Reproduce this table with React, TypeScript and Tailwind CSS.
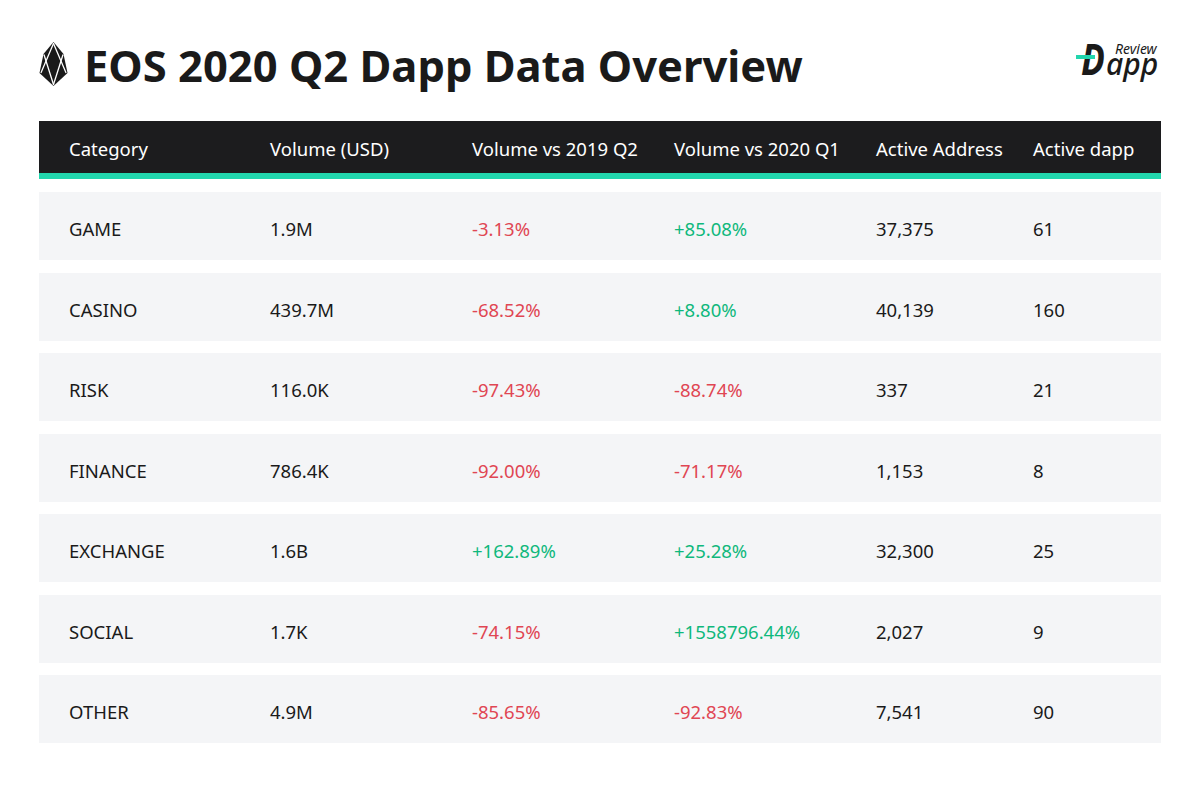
import React from "react";

type Row = {
  cat: string;
  vol: string;
  y19: string;
  q1: string;
  addr: string;
  dapp: string;
};

const rows: Row[] = [
  { cat: "GAME", vol: "1.9M", y19: "-3.13%", q1: "+85.08%", addr: "37,375", dapp: "61" },
  { cat: "CASINO", vol: "439.7M", y19: "-68.52%", q1: "+8.80%", addr: "40,139", dapp: "160" },
  { cat: "RISK", vol: "116.0K", y19: "-97.43%", q1: "-88.74%", addr: "337", dapp: "21" },
  { cat: "FINANCE", vol: "786.4K", y19: "-92.00%", q1: "-71.17%", addr: "1,153", dapp: "8" },
  { cat: "EXCHANGE", vol: "1.6B", y19: "+162.89%", q1: "+25.28%", addr: "32,300", dapp: "25" },
  { cat: "SOCIAL", vol: "1.7K", y19: "-74.15%", q1: "+1558796.44%", addr: "2,027", dapp: "9" },
  { cat: "OTHER", vol: "4.9M", y19: "-85.65%", q1: "-92.83%", addr: "7,541", dapp: "90" },
];

function Pct({ v }: { v: string }) {
  const pos = v.startsWith("+");
  return <span className={pos ? "text-[#0fb87c]" : "text-[#e04653]"}>{v}</span>;
}

function EosLogo() {
  return (
    <svg width="29" height="44" viewBox="0 0 28 44" className="shrink-0">
      <polygon points="14,0 24,12 28,31 14,44 0,31 4,12" fill="#1a1a1a" />
      <g stroke="#ffffff" strokeWidth="1.3" fill="none" strokeLinecap="round">
        <line x1="14" y1="1.5" x2="1.6" y2="30.5" />
        <line x1="14" y1="1.5" x2="26.4" y2="30.5" />
        <line x1="4.6" y1="13" x2="14" y2="42.5" />
        <line x1="23.4" y1="13" x2="14" y2="42.5" />
      </g>
    </svg>
  );
}

function DappLogo() {
  return (
    <div className="relative w-[87px] h-[36px] mt-[2px] mr-[-2px]">
      <span className="absolute left-[5px] top-[-7px] text-[43px] leading-none font-bold italic text-[#1a1a1a] scale-x-[0.82] origin-left">
        D
      </span>
      <span className="absolute left-0 top-[11px] w-[19px] h-[4px] bg-[#22d6ad]" />
      <span className="absolute left-[30px] top-[9px] text-[30px] leading-[0.7] font-medium italic text-[#1a1a1a]">
        app
      </span>
      <span className="absolute left-[39px] top-[-2px] text-[14px] leading-none italic text-[#1a1a1a]">
        Review
      </span>
    </div>
  );
}

export default function App() {
  return (
    <div
      className="w-[1200px] h-[787px] bg-white px-[39px] text-[#1a1a1a]"
      style={{ fontFamily: '"Noto Sans", "Open Sans", sans-serif' }}
    >
      <div className="h-[121px] flex justify-between items-start pt-[42px]">
        <div className="flex items-start gap-[16px]">
          <EosLogo />
          <h1 className="text-[43.5px] leading-none font-bold mt-[2px] text-[#1a1a1a]">
            EOS 2020 Q2 Dapp Data Overview
          </h1>
        </div>
        <DappLogo />
      </div>

      <div className="bg-[#1c1c1e] border-b-[6px] border-[#22d6ad]">
        <div className="h-[52px] grid grid-cols-[201px_202px_202px_202px_157px_1fr] pl-[30px] pt-[3px] items-center text-white text-[18.5px]">
          <div>Category</div>
          <div>Volume (USD)</div>
          <div>Volume vs 2019 Q2</div>
          <div>Volume vs 2020 Q1</div>
          <div>Active Address</div>
          <div>Active dapp</div>
        </div>
      </div>

      <div className="flex flex-col gap-[12.5px] pt-[13px]">
        {rows.map((r) => (
          <div
            key={r.cat}
            className="h-[68px] bg-[#f4f5f7] grid grid-cols-[201px_202px_202px_202px_157px_1fr] pl-[30px] pt-[6px] items-center text-[18.5px]"
          >
            <div>{r.cat}</div>
            <div>{r.vol}</div>
            <div>
              <Pct v={r.y19} />
            </div>
            <div>
              <Pct v={r.q1} />
            </div>
            <div>{r.addr}</div>
            <div>{r.dapp}</div>
          </div>
        ))}
      </div>
    </div>
  );
}
